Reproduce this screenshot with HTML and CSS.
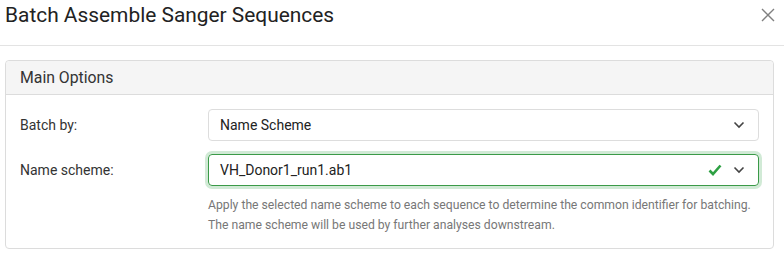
FILE: index.html
```html
<!DOCTYPE html>
<html>
<head>
<meta charset="utf-8">
<link rel="stylesheet" href="styles.css">
</head>
<body>
<div class="modal">
  <div class="modal-header">
    <h1 class="modal-title">Batch Assemble Sanger Sequences</h1>
    <button class="close" aria-label="Close">
      <svg width="16" height="16" viewBox="0 0 16 16"><path d="M2 2L14 14M14 2L2 14" stroke="#808080" stroke-width="1.4" fill="none"/></svg>
    </button>
  </div>
  <div class="modal-body">
    <div class="card">
      <div class="card-header">Main Options</div>
      <div class="card-body">
        <div class="row">
          <label class="label">Batch by:</label>
          <div class="field">
            <div class="select">
              <span class="value">Name Scheme</span>
              <svg class="chev" width="12" height="8" viewBox="0 0 12 8"><path d="M1.5 1.5L6 6L10.5 1.5" stroke="#444" stroke-width="1.6" fill="none"/></svg>
            </div>
          </div>
        </div>
        <div class="row">
          <label class="label">Name scheme:</label>
          <div class="field">
            <div class="select valid">
              <span class="value">VH_Donor1_run1.ab1</span>
              <svg class="check" width="14" height="12" viewBox="0 0 14 12"><path d="M1.5 6.5L5 10L12.5 1.5" stroke="#2ea043" stroke-width="2.6" fill="none"/></svg>
              <svg class="chev" width="12" height="8" viewBox="0 0 12 8"><path d="M1.5 1.5L6 6L10.5 1.5" stroke="#444" stroke-width="1.6" fill="none"/></svg>
            </div>
            <p class="help">Apply the selected name scheme to each sequence to determine the common identifier for batching.<br>The name scheme will be used by further analyses downstream.</p>
          </div>
        </div>
      </div>
    </div>
  </div>
</div>
</body>
</html>
```

FILE: styles.css
```css
* { box-sizing: border-box; }
body {
  margin: 0;
  font-family: Roboto, "Noto Sans", sans-serif;
  color: #222;
  background: #fff;
}
.modal-header {
  height: 46px;
  border-bottom: 1px solid #e3e3e3;
  display: flex;
  align-items: flex-start;
  justify-content: space-between;
  padding: 0 8px 0 5px;
}
.modal-title {
  margin: 0;
  font-size: 20.9px;
  font-weight: 400;
  line-height: 30px;
  color: #222;
}
.close {
  border: 0;
  background: none;
  padding: 0;
  margin-top: 7px;
  width: 16px;
  height: 16px;
}
.close svg { display: block; }
.modal-body {
  padding: 14px 10px 0 5px;
}
.card {
  border: 1px solid #dcdcdc;
  border-radius: 4px;
  height: 189px;
}
.card-header {
  background: #f5f5f5;
  border-bottom: 1px solid #dcdcdc;
  border-radius: 4px 4px 0 0;
  height: 34px;
  padding: 0 14px;
  font-size: 15.8px;
  line-height: 33px;
  color: #333;
}
.card-body {
  padding: 14px 14px 0 14px;
  display: flex;
  flex-direction: column;
  gap: 13px;
}
.row {
  display: flex;
  align-items: flex-start;
}
.label {
  width: 188px;
  flex: none;
  font-size: 14px;
  line-height: 32px;
  color: #333;
}
.field { flex: 1; }
.select {
  height: 32px;
  border: 1px solid #dddddd;
  border-radius: 4px;
  display: flex;
  align-items: center;
  padding: 0 13px 0 11px;
  font-size: 14px;
  color: #222;
}
.select .value { flex: 1; }
.select.valid {
  border-color: #3a9a48;
  box-shadow: 0 0 0 3px rgba(46, 160, 67, 0.22);
}
.check { margin-right: 11px; display: block; }
.chev { display: block; }
.help {
  margin: 9px 0 0 0;
  font-size: 12.2px;
  line-height: 20px;
  color: #777;
}
```
